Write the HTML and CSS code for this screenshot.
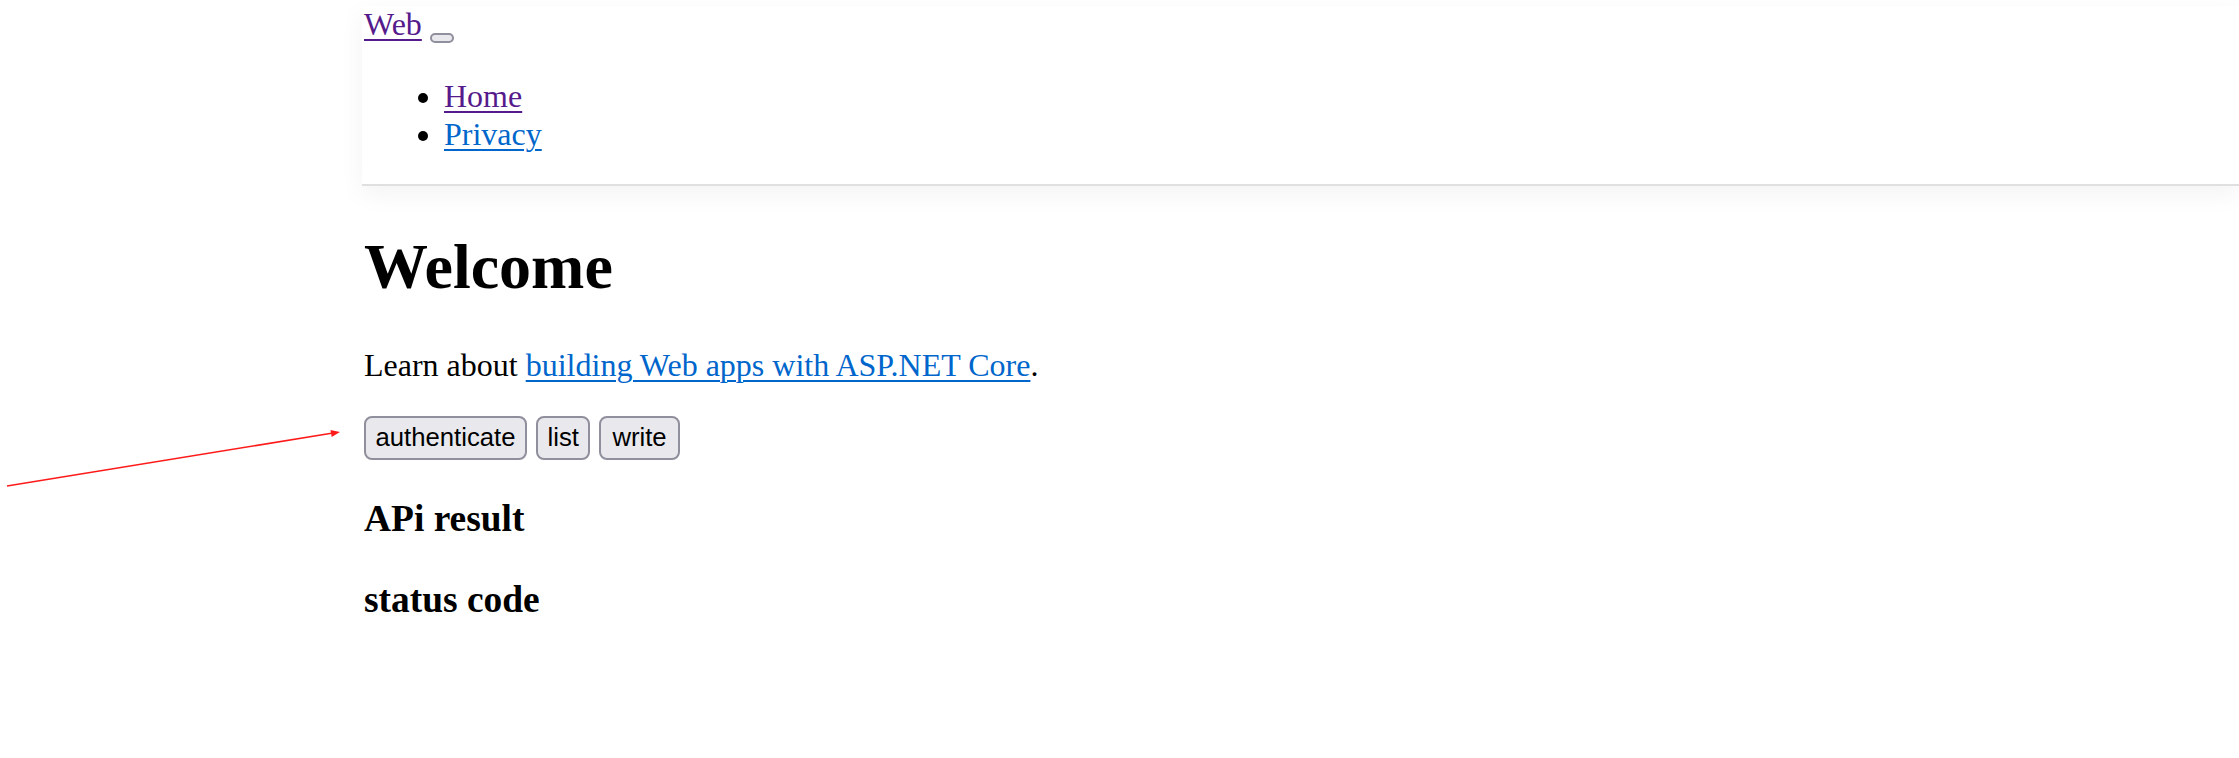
FILE: index.html
```html
<!DOCTYPE html>
<html lang="en">
<head>
<meta charset="utf-8">
<title>Home Page - Web</title>
<link rel="stylesheet" href="styles.css">
</head>
<body>
<div class="page">
  <header class="site-header">
    <nav class="navbar">
      <a class="brand visited" href="#">Web</a> <button class="toggler" type="button" aria-label="Toggle navigation"></button>
      <ul class="nav-list">
        <li><a class="visited" href="#">Home</a></li>
        <li><a href="#">Privacy</a></li>
      </ul>
    </nav>
  </header>
  <main class="main">
    <h1 class="title">Welcome</h1>
    <p class="lead">Learn about <a href="#">building Web apps with ASP.NET Core</a>.</p>
    <div class="actions">
      <button class="btn" type="button">authenticate</button>
      <button class="btn" type="button">list</button>
      <button class="btn btn-write" type="button">write</button>
    </div>
    <h3 class="section">APi result</h3>
    <h3 class="section">status code</h3>
  </main>
</div>
<svg class="annotation" width="2239" height="758" viewBox="0 0 2239 758" aria-hidden="true">
  <line x1="7" y1="486" x2="333" y2="433" stroke="#ff1a1a" stroke-width="1.6"/>
  <polygon points="340,432 331.7,436.9 330.5,430" fill="#ff1a1a"/>
</svg>
</body>
</html>
```
FILE: styles.css
```css
html, body {
  margin: 0;
  background: #ffffff;
}

body {
  font-family: "Liberation Serif", "Times New Roman", serif;
  font-size: 32px;
  color: #000000;
  position: relative;
  height: 758px;
  overflow: hidden;
}

a {
  color: #0066cc;
  text-decoration-thickness: 2px;
  text-underline-offset: 4px;
}

a.visited {
  color: #551a8b;
}

.page {
  padding: 6px 0 0 362px;
}

.navbar {
  padding-left: 2px;
  background: #ffffff;
  border-bottom: 2px solid #e0e0e0;
  box-shadow: 0 8px 24px rgba(0, 0, 0, 0.05);
}

.toggler {
  display: inline-block;
  box-sizing: border-box;
  width: 24px;
  height: 10px;
  padding: 0;
  border: 2px solid #8f8f9d;
  border-radius: 5px;
  background: #e9e9ed;
  vertical-align: -6px;
}

.nav-list {
  margin: 35px 0 31px;
  padding-left: 80px;
  line-height: 37.5px;
}

.main {
  padding-left: 2px;
}

.title {
  font-size: 64px;
  margin: 44px 0 42.88px;
}

.lead {
  margin: 32px 0;
}

.actions {
  display: flex;
  gap: 9px;
}

.btn {
  box-sizing: border-box;
  height: 44px;
  padding: 0 9.5px;
  font-family: "Liberation Sans", Arial, sans-serif;
  font-size: 25.7px;
  color: #000000;
  background: #e9e9ed;
  border: 2px solid #8f8f9d;
  border-radius: 8px;
}

.btn-write {
  padding: 0 11px;
}

.section {
  font-size: 37.44px;
  margin: 37.44px 0;
}

.annotation {
  position: absolute;
  top: 0;
  left: 0;
  pointer-events: none;
}
```
